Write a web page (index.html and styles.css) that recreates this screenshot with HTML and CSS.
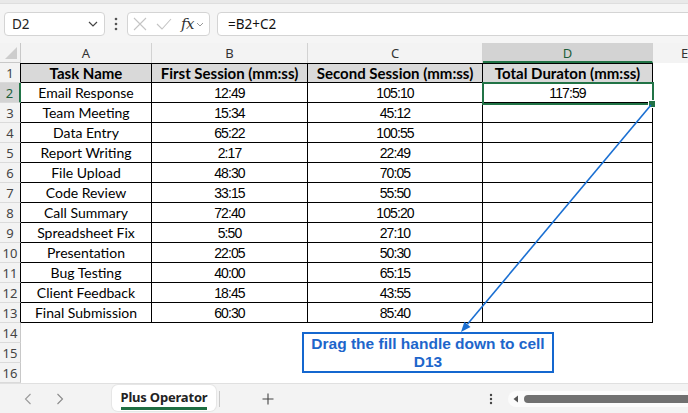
FILE: index.html
```html
<!DOCTYPE html>
<html lang="en">
<head>
    <meta charset="UTF-8">
    <meta name="viewport" content="width=device-width, initial-scale=1.0">
    <title>Plus Operator</title>
    <link rel="stylesheet" href="styles.css">
</head>
<body>
    <div class="top-strip"></div>

    <div class="formula-bar">
        <div class="name-box">
            <span>D2</span>
            <svg width="10" height="6" viewBox="0 0 10 6"><path d="M1 1 L5 5 L9 1" fill="none" stroke="#444" stroke-width="1.2"/></svg>
        </div>
        <div class="more">
            <svg width="4" height="14" viewBox="0 0 4 14"><circle cx="2" cy="2" r="1.3" fill="#555"/><circle cx="2" cy="7" r="1.3" fill="#555"/><circle cx="2" cy="12" r="1.3" fill="#555"/></svg>
        </div>
        <div class="fx-box">
            <svg class="cancel" width="14" height="14" viewBox="0 0 14 14"><path d="M1 1 L13 13 M13 1 L1 13" stroke="#c4c4c4" stroke-width="1.1"/></svg>
            <svg class="enter" width="16" height="12" viewBox="0 0 16 12"><path d="M1 6 L6 11 L15 1" fill="none" stroke="#c4c4c4" stroke-width="1.1"/></svg>
            <span class="fx">fx</span>
            <svg width="8" height="5" viewBox="0 0 8 5"><path d="M1 1 L4 4 L7 1" fill="none" stroke="#999" stroke-width="1"/></svg>
        </div>
        <div class="formula-input">=B2+C2</div>
    </div>

    <div class="sheet">
        <div class="grid">
            <div class="corner"><div class="tri"></div></div>
            <div class="col-head">A</div>
            <div class="col-head">B</div>
            <div class="col-head">C</div>
            <div class="col-head active">D</div>
            <div class="col-head">E</div>

            <div class="row-num t">1</div>
            <div class="cell th first">Task Name</div>
            <div class="cell th">First Session (mm:ss)</div>
            <div class="cell th">Second Session (mm:ss)</div>
            <div class="cell th">Total Duraton (mm:ss)</div>
            <div class="blank"></div>

            <div class="row-num t active">2</div>
            <div class="cell first">Email Response</div>
            <div class="cell num">12:49</div>
            <div class="cell num">105:10</div>
            <div class="cell num">117:59</div>
            <div class="blank"></div>

            <div class="row-num t">3</div>
            <div class="cell first">Team Meeting</div>
            <div class="cell num">15:34</div>
            <div class="cell num">45:12</div>
            <div class="cell"></div>
            <div class="blank"></div>

            <div class="row-num t">4</div>
            <div class="cell first">Data Entry</div>
            <div class="cell num">65:22</div>
            <div class="cell num">100:55</div>
            <div class="cell"></div>
            <div class="blank"></div>

            <div class="row-num t">5</div>
            <div class="cell first">Report Writing</div>
            <div class="cell num">2:17</div>
            <div class="cell num">22:49</div>
            <div class="cell"></div>
            <div class="blank"></div>

            <div class="row-num t">6</div>
            <div class="cell first">File Upload</div>
            <div class="cell num">48:30</div>
            <div class="cell num">70:05</div>
            <div class="cell"></div>
            <div class="blank"></div>

            <div class="row-num t">7</div>
            <div class="cell first">Code Review</div>
            <div class="cell num">33:15</div>
            <div class="cell num">55:50</div>
            <div class="cell"></div>
            <div class="blank"></div>

            <div class="row-num t">8</div>
            <div class="cell first">Call Summary</div>
            <div class="cell num">72:40</div>
            <div class="cell num">105:20</div>
            <div class="cell"></div>
            <div class="blank"></div>

            <div class="row-num t">9</div>
            <div class="cell first">Spreadsheet Fix</div>
            <div class="cell num">5:50</div>
            <div class="cell num">27:10</div>
            <div class="cell"></div>
            <div class="blank"></div>

            <div class="row-num t">10</div>
            <div class="cell first">Presentation</div>
            <div class="cell num">22:05</div>
            <div class="cell num">50:30</div>
            <div class="cell"></div>
            <div class="blank"></div>

            <div class="row-num t">11</div>
            <div class="cell first">Bug Testing</div>
            <div class="cell num">40:00</div>
            <div class="cell num">65:15</div>
            <div class="cell"></div>
            <div class="blank"></div>

            <div class="row-num t">12</div>
            <div class="cell first">Client Feedback</div>
            <div class="cell num">18:45</div>
            <div class="cell num">43:55</div>
            <div class="cell"></div>
            <div class="blank"></div>

            <div class="row-num t">13</div>
            <div class="cell first">Final Submission</div>
            <div class="cell num">60:30</div>
            <div class="cell num">85:40</div>
            <div class="cell"></div>
            <div class="blank"></div>

            <div class="row-num">14</div>
            <div class="blank wide"></div>

            <div class="row-num">15</div>
            <div class="blank wide"></div>

            <div class="row-num">16</div>
            <div class="blank wide"></div>
        </div>

        <!-- selection + annotation layer -->
        <div class="selection"></div>
        <div class="fill-handle"></div>
        <svg class="arrow" width="688" height="340" viewBox="0 0 688 340">
            <line x1="651" y1="62" x2="467.4" y2="281.3" stroke="#1a6fd2" stroke-width="1.6"/>
            <polygon points="461,289 470.5,283.9 464.4,278.8" fill="#1a6fd2"/>
        </svg>
        <div class="callout">Drag the fill handle down to cell<br>D13</div>
    </div>

    <div class="tab-bar">
        <div class="nav">
            <svg width="8" height="12" viewBox="0 0 8 12"><path d="M6.5 1 L1.5 6 L6.5 11" fill="none" stroke="#9a9a9a" stroke-width="1.1"/></svg>
            <svg width="8" height="12" viewBox="0 0 8 12"><path d="M1.5 1 L6.5 6 L1.5 11" fill="none" stroke="#8a8a8a" stroke-width="1.1"/></svg>
        </div>
        <div class="tab"><span>Plus Operator</span></div>
        <div class="sep"></div>
        <svg class="add" width="12" height="12" viewBox="0 0 12 12"><path d="M6 0.5 V11.5 M0.5 6 H11.5" stroke="#444" stroke-width="1.1"/></svg>
        <svg class="dots" width="4" height="12" viewBox="0 0 4 12"><circle cx="2" cy="2" r="1.2" fill="#444"/><circle cx="2" cy="6" r="1.2" fill="#444"/><circle cx="2" cy="10" r="1.2" fill="#444"/></svg>
        <div class="scroll">
            <svg width="6" height="8" viewBox="0 0 6 8"><path d="M5 0.5 L0.5 4 L5 7.5 Z" fill="#555"/></svg>
            <div class="thumb"></div>
        </div>
    </div>
</body>
</html>
```

FILE: styles.css
```css
body {
    margin: 0;
    width: 688px;
    height: 413px;
    overflow: hidden;
    background: #fff;
    font-family: "Lato", sans-serif;
    color: #000;
}
.top-strip {
    height: 3px;
    background: #e9e9e9;
    border-bottom: 1px solid #dedede;
}
.formula-bar {
    display: flex;
    align-items: center;
    height: 24px;
    padding: 8px 0 7px 4px;
    background: #f5f5f5;
}
.name-box {
    width: 101px;
    height: 24px;
    box-sizing: border-box;
    border: 1px solid #d4d4d4;
    border-radius: 4px;
    background: #fff;
    display: flex;
    align-items: center;
    justify-content: space-between;
    padding: 0 6px 0 7px;
    font: 13.5px "Noto Sans", sans-serif;
    color: #222;
}
.more {
    width: 22px;
    display: flex;
    justify-content: center;
}
.fx-box {
    width: 83px;
    height: 24px;
    box-sizing: border-box;
    border: 1px solid #d4d4d4;
    border-radius: 4px;
    background: #fff;
    display: flex;
    align-items: center;
    padding-left: 5px;
    margin-right: 7px;
}
.fx-box .enter {
    margin-left: 9px;
}
.fx {
    font: italic 15px "DejaVu Serif", serif;
    color: #333;
    margin-left: 9px;
    margin-right: 2px;
    letter-spacing: -0.5px;
}
.formula-input {
    flex: 1;
    height: 24px;
    box-sizing: border-box;
    border: 1px solid #d4d4d4;
    border-radius: 4px;
    background: #fff;
    margin-right: -6px;
    padding-left: 10px;
    font: 13.5px/22px "Noto Sans", sans-serif;
    color: #111;
}

/* sheet */
.sheet {
    position: relative;
    height: 340px;
}
.grid {
    display: grid;
    grid-template-columns: 21px 131px 156px 175px 170px 64px;
    grid-auto-rows: 20px;
}
.grid > div {
    box-sizing: border-box;
}
.corner {
    position: relative;
    background: #f3f3f3;
    border-right: 1px solid #c8c8c8;
    border-bottom: 1px solid #c8c8c8;
}
.tri {
    position: absolute;
    right: 3px;
    bottom: 3px;
    width: 0;
    height: 0;
    border-left: 12px solid transparent;
    border-bottom: 12px solid #cdcdcd;
}
.col-head {
    background: #f3f3f3;
    border-right: 1px solid #d2d2d2;
    text-align: center;
    font: 13px/20px "Noto Sans", sans-serif;
    color: #333;
}
.col-head.active {
    background: #d3d3d3;
    border-bottom: 2px solid #217346;
    color: #1e5e3a;
}
.row-num {
    background: #f3f3f3;
    border-right: 1px solid #c8c8c8;
    border-bottom: 1px solid #dadada;
    text-align: center;
    font: 13px/20px "Noto Sans", sans-serif;
    color: #444;
}
.row-num.t {
    border-right-color: #000;
}
.row-num.active {
    background: #d3d3d3;
    border-right: 2px solid #217346;
    color: #1e5e3a;
}
.cell {
    border-right: 1px solid #000;
    border-bottom: 1px solid #000;
    text-align: center;
    font-size: 14px;
    line-height: 20px;
    white-space: nowrap;
    overflow: hidden;
}
.cell.th {
    background: #d9d9d9;
    font-size: 15px;
    font-weight: bold;
    border-top: 1px solid #000;
    line-height: 18px;
}
.cell.num {
    font: 14px/20px "Liberation Sans", sans-serif;
    letter-spacing: -0.9px;
}
.blank {
    background: #fff;
}
.blank.wide {
    grid-column: 2 / 7;
}

.selection {
    position: absolute;
    left: 482px;
    top: 39px;
    width: 172px;
    height: 23px;
    box-sizing: border-box;
    border: 2px solid #217346;
}
.fill-handle {
    position: absolute;
    left: 649px;
    top: 58px;
    width: 6px;
    height: 6px;
    background: #217346;
    box-shadow: 0 0 0 1px #fff;
}
.arrow {
    position: absolute;
    left: 0;
    top: 0;
    pointer-events: none;
}
.callout {
    position: absolute;
    left: 302px;
    top: 289px;
    width: 252px;
    height: 41px;
    box-sizing: border-box;
    border: 2px solid #1467cf;
    background: #fff;
    text-align: center;
    font: bold 15.5px/18px "Liberation Sans", sans-serif;
    color: #1d66cb;
    padding-top: 1px;
}

/* sheet tabs */
.tab-bar {
    display: flex;
    align-items: center;
    height: 29px;
    background: #f3f3f3;
    border-top: 1px solid #e0e0e0;
}
.nav {
    width: 112px;
    flex-shrink: 0;
    display: flex;
    gap: 24px;
    padding-left: 24px;
    box-sizing: border-box;
}
.tab {
    width: 104px;
    height: 26px;
    align-self: flex-start;
    margin-top: 1px;
    background: #fff;
    border-radius: 6px;
    box-shadow: 0 0 0 1px #e6e6e6;
    display: flex;
    justify-content: center;
}
.tab span {
    font: bold 13px/20px "Noto Sans", sans-serif;
    color: #222;
    border-bottom: 3px solid #1e6e42;
    height: 20px;
    margin-top: 2px;
    letter-spacing: -0.2px;
}
.sep {
    width: 1px;
    height: 16px;
    background: #c9c9c9;
    margin-left: 3px;
}
.add {
    margin-left: 42px;
}
.dots {
    margin-left: 215px;
}
.scroll {
    flex: 1;
    height: 16px;
    margin-left: 15px;
    margin-right: -10px;
    background: #fbfbfb;
    border-radius: 8px;
    display: flex;
    align-items: center;
    padding-left: 5px;
}
.thumb {
    flex: 1;
    height: 8px;
    margin-left: 5px;
    background: #707070;
    border-radius: 4px;
}
```
